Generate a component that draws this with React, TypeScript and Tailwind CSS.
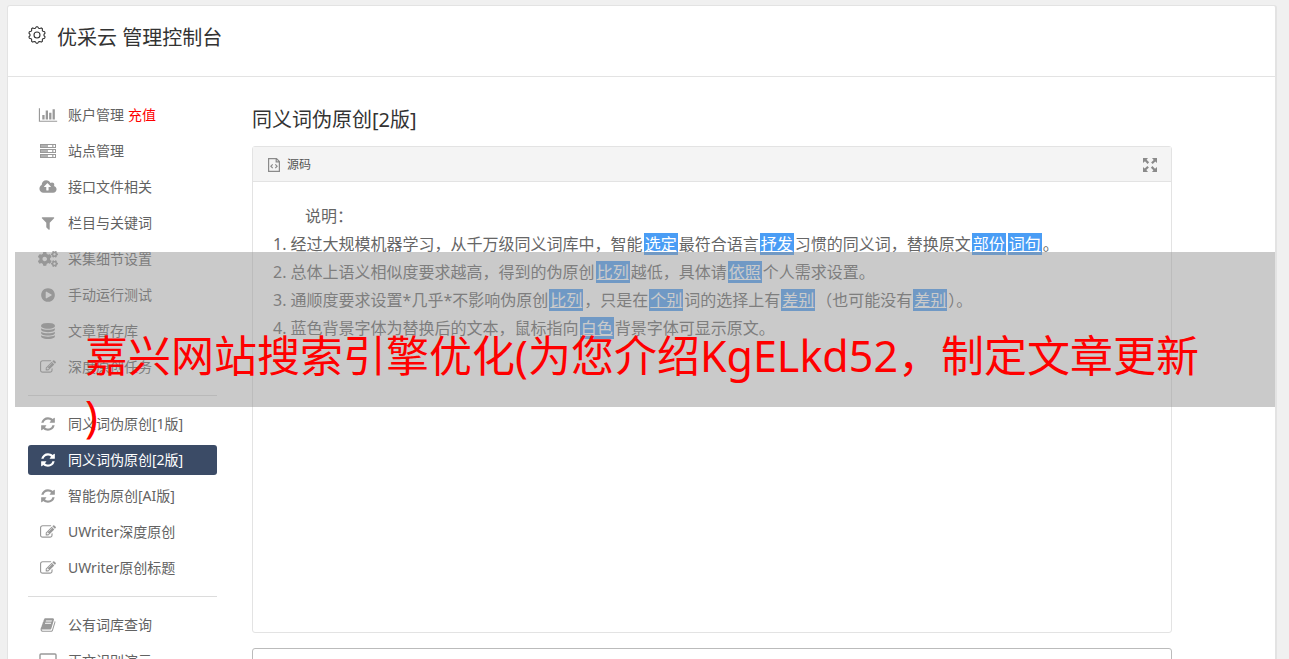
/**
 * ConsolePage — admin console: sidebar menu, rewrite editor, promo banner.
 */
import React, { useState } from 'react'
import { FaCogs } from 'react-icons/fa'

// ── Icons ────────────────────────────────────────────────────────────

function Glyph({ d, box = '0 0 1792 1792' }: { d: string; box?: string }) {
  return (
    <svg viewBox={box} className="h-4 w-5" fill="currentColor" aria-hidden="true">
      <path d={d} />
    </svg>
  )
}

const WIDE = '0 0 2048 1792'

const PATHS = {
  chart: 'M640 896v512h-256v-512h256zm384-512v1024h-256v-1024h256zm1024 1152v128h-2048v-1536h128v1408h1920zm-640-896v768h-256v-768h256zm384-384v1152h-256v-1152h256z',
  upload: 'M1344 864q0-14-9-23l-352-352q-9-9-23-9t-23 9l-351 351q-10 12-10 24 0 14 9 23t23 9h224v352q0 13 9.5 22.5t22.5 9.5h192q13 0 22.5-9.5t9.5-22.5v-352h224q13 0 22.5-9.5t9.5-22.5zm640 288q0 159-112.5 271.5t-271.5 112.5h-1088q-185 0-316.5-131.5t-131.5-316.5q0-130 70-240t188-165q-2-30-2-43 0-212 150-362t362-150q156 0 285.5 87t188.5 231q71-62 166-62 106 0 181 75t75 181q0 76-41 138 130 31 213.5 135.5t83.5 238.5z',
  filter: 'M1595 295q17 41-14 70l-493 493v742q0 42-39 59-13 5-25 5-27 0-45-19l-256-256q-19-19-19-45v-486l-493-493q-31-29-14-70 17-39 59-39h1280q42 0 59 39z',
  play: 'M896 128q209 0 385.5 103t279.5 279.5 103 385.5-103 385.5-279.5 279.5-385.5 103-385.5-103-279.5-279.5-103-385.5 103-385.5 279.5-279.5 385.5-103zm384 823q32-18 32-55t-32-55l-544-320q-31-19-64-1-32 19-32 56v640q0 37 32 56 16 8 32 8 17 0 32-9z',
  database: 'M896 768q237 0 443-43t325-127v170q0 69-103 128t-280 93.5-385 34.5-385-34.5-280-93.5-103-128v-170q119 84 325 127t443 43zm0 768q237 0 443-43t325-127v170q0 69-103 128t-280 93.5-385 34.5-385-34.5-280-93.5-103-128v-170q119 84 325 127t443 43zm0-384q237 0 443-43t325-127v170q0 69-103 128t-280 93.5-385 34.5-385-34.5-280-93.5-103-128v-170q119 84 325 127t443 43zm0-1152q208 0 385 34.5t280 93.5 103 128v128q0 69-103 128t-280 93.5-385 34.5-385-34.5-280-93.5-103-128v-128q0-69 103-128t280-93.5 385-34.5z',
  edit: 'M888 1184l116-116-152-152-116 116v56h96v96h56zm440-720q-16-16-33 1l-350 350q-17 17-1 33t33-1l350-350q17-17 1-33zm80 594v190q0 119-84.5 203.5t-203.5 84.5h-832q-119 0-203.5-84.5t-84.5-203.5v-832q0-119 84.5-203.5t203.5-84.5h832q63 0 117 25 15 7 18 23 3 17-9 29l-49 49q-14 14-32 8-23-6-45-6h-832q-66 0-113 47t-47 113v832q0 66 47 113t113 47h832q66 0 113-47t47-113v-126q0-13 9-22l64-64q15-15 35-7t20 29zm-96-738l288 288-672 672h-288v-288zm444 132l-92 92-288-288 92-92q28-28 68-28t68 28l152 152q28 28 28 68t-28 68z',
  refresh: 'M1639 1056q0 5-1 7-64 268-268 434.5t-478 166.5q-146 0-282.5-55t-243.5-157l-129 129q-19 19-45 19t-45-19-19-45v-448q0-26 19-45t45-19h448q26 0 45 19t19 45-19 45l-137 137q71 66 161 102t187 36q134 0 250-65t186-179q11-17 53-117 8-23 30-23h192q13 0 22.5 9.5t9.5 22.5zm25-800v448q0 26-19 45t-45 19h-448q-26 0-45-19t-19-45 19-45l138-138q-148-137-349-137-134 0-250 65t-186 179q-11 17-53 117-8 23-30 23h-199q-13 0-22.5-9.5t-9.5-22.5v-7q65-268 270-434.5t480-166.5q146 0 284 55.5t245 156.5l130-129q19-19 45-19t45 19 19 45z',
  book: 'M1703 478q40 57 18 129l-275 906q-19 64-76.5 107.5t-122.5 43.5h-923q-77 0-148.5-53.5t-99.5-131.5q-24-67-2-127 0-4 3-27t4-37q1-8-3-21.5t-3-19.5q2-11 8-21t16.5-23.5 16.5-23.5q23-38 45-91.5t30-91.5q3-10 .5-30t-.5-28q3-11 17-28t17-23q21-36 42-92t25-90q1-9-2.5-32t.5-28q4-13 22-30.5t22-22.5q19-26 42.5-84.5t27.5-96.5q1-8-3-25.5t-2-26.5q2-8 9-18t18-23 17-21q8-12 16.5-30.5t15-35 16-36 19.5-32 26.5-23.5 36-11.5 47.5 5.5l-1 3q38-9 51-9h761q74 0 114 56t18 130l-274 906q-36 119-71.5 153.5t-128.5 34.5h-869q-27 0-38 15-11 16-1 43 24 70 144 70h923q29 0 56-15.5t35-41.5l300-987q7-22 5-57 38 15 59 43zm-1064 2q-4 13 2 22.5t20 9.5h608q13 0 25.5-9.5t16.5-22.5l21-64q4-13-2-22.5t-20-9.5h-608q-13 0-25.5 9.5t-16.5 22.5zm-83 256q-4 13 2 22.5t20 9.5h608q13 0 25.5-9.5t16.5-22.5l21-64q4-13-2-22.5t-20-9.5h-608q-13 0-25.5 9.5t-16.5 22.5z',
}

// Outline of a gear with ten soft teeth, centred in an 18x18 box
const GEAR = Array.from({ length: 40 }, (_, i) => {
  const angle = ((i - 0.5) * Math.PI) / 20
  const radius = i % 4 < 2 ? 8.3 : 7
  return `${(9 + radius * Math.sin(angle)).toFixed(2)},${(9 - radius * Math.cos(angle)).toFixed(2)}`
}).join(' ')

const GearIcon = () => (
  <svg viewBox="0 0 18 18" className="mt-[3px] h-[18px] w-[18px]" fill="none" stroke="currentColor" strokeWidth="1.1" strokeLinejoin="round" aria-hidden="true">
    <circle cx="9" cy="9" r="3" />
    <polygon points={GEAR} />
  </svg>
)

const ServerIcon = () => (
  <svg viewBox="0 0 20 16" className="h-4 w-5" fill="none" stroke="currentColor" aria-hidden="true">
    {[1.5, 6.5, 11.5].map(y => (
      <g key={y}>
        <rect x="2.5" y={y} width="15" height="3" />
        <path d={`M3 ${y + 1.5}h7M14 ${y + 1.5}h1.5`} strokeWidth="1.4" />
      </g>
    ))}
  </svg>
)

const MonitorIcon = () => (
  <svg viewBox="0 0 20 16" className="h-4 w-5" fill="none" stroke="currentColor" aria-hidden="true">
    <rect x="2" y="1" width="16" height="10.5" rx="1" strokeWidth="1.4" />
    <path d="M6 14.5h8M10 11.5v3" strokeWidth="1.6" />
  </svg>
)

const SourceIcon = () => (
  <svg viewBox="0 0 12 14" className="h-3.5 w-3" fill="none" stroke="#8a8a8a" aria-hidden="true">
    <path d="M.6.6h7.9l2.9 2.9v9.9H.6zM8.2.8v3h3" strokeWidth="1.2" />
    <path d="M4.7 6.3L2.9 8.2l1.8 1.9M7.3 6.3l1.8 1.9-1.8 1.9" strokeWidth="1.2" />
  </svg>
)

const ExpandIcon = () => (
  <svg viewBox="0 0 14 14" className="h-3.5 w-3.5" fill="#8a8a8a" aria-hidden="true">
    {[0, 90, 180, 270].map(r => (
      <path key={r} transform={`rotate(${r} 7 7)`} d="M0 0h5L3.6 1.7 6.1 4.3 4.6 5.9 2 3.3 0 5z" />
    ))}
  </svg>
)

// ── Sidebar ──────────────────────────────────────────────────────────

interface MenuItem {
  label: string
  icon: React.ReactNode
  badge?: string
}

const MENU: MenuItem[][] = [
  [
    { label: '账户管理', icon: <Glyph d={PATHS.chart} box={WIDE} />, badge: '充值' },
    { label: '站点管理', icon: <ServerIcon /> },
    { label: '接口文件相关', icon: <Glyph d={PATHS.upload} box={WIDE} /> },
    { label: '栏目与关键词', icon: <Glyph d={PATHS.filter} /> },
    { label: '采集细节设置', icon: <FaCogs className="h-4 w-5" /> },
    { label: '手动运行测试', icon: <Glyph d={PATHS.play} /> },
    { label: '文章暂存库', icon: <Glyph d={PATHS.database} /> },
    { label: '深度原创任务', icon: <Glyph d={PATHS.edit} /> },
  ],
  [
    { label: '同义词伪原创[1版]', icon: <Glyph d={PATHS.refresh} /> },
    { label: '同义词伪原创[2版]', icon: <Glyph d={PATHS.refresh} /> },
    { label: '智能伪原创[AI版]', icon: <Glyph d={PATHS.refresh} /> },
    { label: 'UWriter深度原创', icon: <Glyph d={PATHS.edit} /> },
    { label: 'UWriter原创标题', icon: <Glyph d={PATHS.edit} /> },
  ],
  [
    { label: '公有词库查询', icon: <Glyph d={PATHS.book} /> },
    { label: '正文识别演示', icon: <MonitorIcon /> },
  ],
]

function Sidebar({ active, onSelect }: { active: string; onSelect: (label: string) => void }) {
  return (
    <nav className="w-[189px] shrink-0">
      {MENU.map((group, i) => (
        <ul
          key={i}
          className={`flex flex-col gap-1.5 ${i > 0 ? 'mt-[13px] border-t border-[#dcdcdc] pt-[13px]' : ''}`}
        >
          {group.map(item => {
            const on = item.label === active
            return (
              <li key={item.label}>
                <a
                  href="#"
                  onClick={e => { e.preventDefault(); onSelect(item.label) }}
                  className={`flex h-[30px] items-center rounded-[3px] px-2.5 text-sm ${on ? 'bg-[#3b4b66] text-white' : 'text-[#626262]'}`}
                >
                  <span className={`mr-2.5 ${on ? 'text-white' : 'text-[#999]'}`}>{item.icon}</span>
                  <span>{item.label}</span>
                  {item.badge && <span className="ml-1 text-[#f00]">{item.badge}</span>}
                </a>
              </li>
            )
          })}
        </ul>
      ))}
    </nav>
  )
}

// ── Editor ───────────────────────────────────────────────────────────

function Swap({ children }: { children: React.ReactNode }) {
  return <u className="mx-px bg-[#4a9df5] px-px text-white">{children}</u>
}

function Editor() {
  return (
    <section className="rounded-[3px] border border-[#e3e3e3]">
      <div className="flex h-[35px] items-center justify-between border-b border-[#e3e3e3] bg-[#f4f4f4] pt-0.5 pr-3.5 pl-[15px]">
        <button type="button" className="flex items-center gap-[7px] text-xs text-[#555]">
          <SourceIcon />
          源码
        </button>
        <button type="button" aria-label="全屏">
          <ExpandIcon />
        </button>
      </div>
      <div className="min-h-[450px] px-5 pt-5 text-base leading-7 text-[#666]">
        <p className="indent-8">说明：</p>
        <ol className="list-inside list-decimal">
          <li>
            经过大规模机器学习，从千万级同义词库中，智能<Swap>选定</Swap>最符合语言<Swap>抒发</Swap>习惯的同义词，替换原文<Swap>部份</Swap><Swap>词句</Swap>。
          </li>
          <li>
            总体上语义相似度要求越高，得到的伪原创<Swap>比列</Swap>越低，具体请<Swap>依照</Swap>个人需求设置。
          </li>
          <li>
            通顺度要求设置*几乎*不影响伪原创<Swap>比列</Swap>，只是在<Swap>个别</Swap>词的选择上有<Swap>差别</Swap>（也可能没有<Swap>差别</Swap>）。
          </li>
          <li>
            蓝色背景字体为替换后的文本，鼠标指向<Swap>白色</Swap>背景字体可显示原文。
          </li>
        </ol>
      </div>
    </section>
  )
}

// ── Page ─────────────────────────────────────────────────────────────

export default function App() {
  const [active, setActive] = useState('同义词伪原创[2版]')

  return (
    <div className="relative h-screen overflow-hidden bg-[#f0f0f0] pt-[5px] pr-3 pl-[7px] font-['Noto_Sans','Noto_Sans_CJK_SC',sans-serif]">
      <div className="rounded-[3px] border border-r-2 border-[#e3e3e3] bg-white">
        <header className="flex h-[71px] items-start gap-[11px] border-b border-[#e3e3e3] px-5 pt-[17px] text-[#333]">
          <GearIcon />
          <h1 className="text-xl leading-[30px]">优采云 管理控制台</h1>
        </header>
        <div className="flex gap-[35px] px-5 pt-[23px]">
          <Sidebar active={active} onSelect={setActive} />
          <main className="max-w-[920px] min-w-0 flex-1">
            <h2 className="mt-[5px] mb-[11px] text-xl leading-[30px] text-[#333]">同义词伪原创[2版]</h2>
            <Editor />
            <textarea
              aria-label="原文"
              className="mt-[15px] block h-40 w-full resize-none rounded-[3px] border border-[#bbb]"
            />
          </main>
        </div>
      </div>

      {/* Promo banner over the page */}
      <div className="absolute top-[252px] right-3.5 left-[15px] h-[155px] bg-[#969696]/50 px-[70px] pt-[74px]">
        <p className="text-[43px] leading-[60px] break-all text-[#f00] [line-break:anywhere]">
          嘉兴网站搜索引擎优化(为您介绍KgELkd52，制定文章更新)
        </p>
      </div>
    </div>
  )
}
